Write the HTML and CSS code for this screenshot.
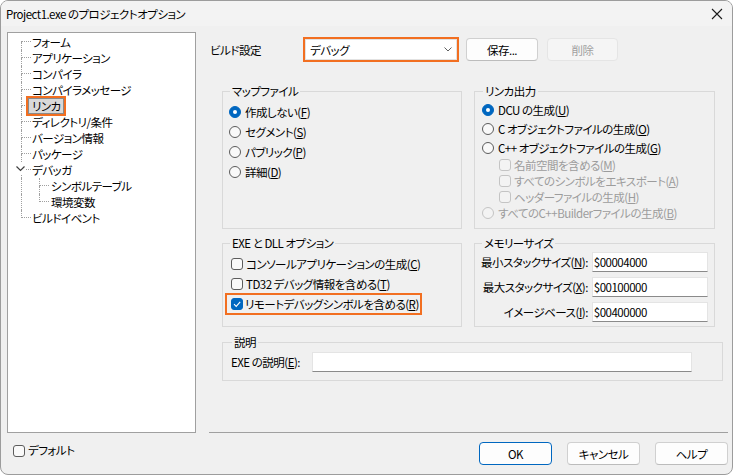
FILE: index.html
```html
<!DOCTYPE html>
<html lang="ja">
<head>
  <meta charset="UTF-8" />
  <title>Project1.exe のプロジェクトオプション</title>
  <link rel="stylesheet" href="styles.css">
</head>
<body>
  <div class="window">
    <div class="titlebar">
      <span class="title">Project1.exe のプロジェクトオプション</span>
      <svg class="close" width="12" height="12" viewBox="0 0 12 12"><path d="M1 1L11 11M11 1L1 11" stroke="#1b1b1b" stroke-width="1.1" fill="none"/></svg>
    </div>

    <div class="client">
      <!-- 左: ツリー -->
      <div class="side">
        <div class="tree">
          <div class="node first"><span class="conn"></span><span class="label">フォーム</span></div>
          <div class="node"><span class="conn"></span><span class="label">アプリケーション</span></div>
          <div class="node"><span class="conn"></span><span class="label">コンパイラ</span></div>
          <div class="node"><span class="conn"></span><span class="label">コンパイラメッセージ</span></div>
          <div class="node"><span class="conn"></span><span class="label sel">リンカ</span></div>
          <div class="node"><span class="conn"></span><span class="label">ディレクトリ/条件</span></div>
          <div class="node"><span class="conn"></span><span class="label">バージョン情報</span></div>
          <div class="node"><span class="conn"></span><span class="label">パッケージ</span></div>
          <div class="node">
            <svg class="toggle" width="15" height="16" viewBox="0 0 15 16">
              <polyline points="0.5,4.5 4.5,8.5 8.5,4.5" fill="none" stroke="#404040" stroke-width="1.2"/>
              <line x1="10" y1="7.5" x2="15" y2="7.5" stroke="#a0a0a0" stroke-dasharray="1 1"/>
              <line x1="5.5" y1="13" x2="5.5" y2="16" stroke="#a0a0a0" stroke-dasharray="1 1"/>
            </svg>
            <span class="label">デバッガ</span>
          </div>
          <div class="node child"><span class="pipe"></span><span class="conn"></span><span class="label">シンボルテーブル</span></div>
          <div class="node child last"><span class="pipe"></span><span class="conn"></span><span class="label">環境変数</span></div>
          <div class="node last"><span class="conn"></span><span class="label">ビルドイベント</span></div>
        </div>
        <label class="default-row"><span class="box"></span><span>デフォルト</span></label>
      </div>

      <!-- 右: 設定 -->
      <div class="main">
        <div class="build-row">
          <span class="build-label">ビルド設定</span>
          <div class="combo">
            <span>デバッグ</span>
            <svg width="8" height="5" viewBox="0 0 8 5"><polyline points="0.5,0.5 4,4 7.5,0.5" fill="none" stroke="#606060" stroke-width="1"/></svg>
          </div>
          <button class="btn save">保存...</button>
          <button class="btn del" disabled>削除</button>
        </div>

        <div class="groups">
          <fieldset class="grp map">
            <legend>マップファイル</legend>
            <label class="opt"><span class="radio on"></span><span>作成しない(<u>F</u>)</span></label>
            <label class="opt"><span class="radio"></span><span>セグメント(<u>S</u>)</span></label>
            <label class="opt"><span class="radio"></span><span>パブリック(<u>P</u>)</span></label>
            <label class="opt"><span class="radio"></span><span>詳細(<u>D</u>)</span></label>
          </fieldset>

          <fieldset class="grp out">
            <legend>リンカ出力</legend>
            <label class="opt"><span class="radio on"></span><span>DCU の生成(<u>U</u>)</span></label>
            <label class="opt"><span class="radio"></span><span>C オブジェクトファイルの生成(<u>O</u>)</span></label>
            <label class="opt"><span class="radio"></span><span>C++ オブジェクトファイルの生成(<u>G</u>)</span></label>
            <label class="opt sub off"><span class="box"></span><span>名前空間を含める(<u>M</u>)</span></label>
            <label class="opt sub off"><span class="box"></span><span>すべてのシンボルをエキスポート(<u>A</u>)</span></label>
            <label class="opt sub off"><span class="box"></span><span>ヘッダーファイルの生成(<u>H</u>)</span></label>
            <label class="opt tail off"><span class="radio"></span><span>すべてのC++Builderファイルの生成(<u>B</u>)</span></label>
          </fieldset>

          <fieldset class="grp exe">
            <legend>EXE と DLL オプション</legend>
            <label class="opt"><span class="box"></span><span>コンソールアプリケーションの生成(<u>C</u>)</span></label>
            <label class="opt"><span class="box"></span><span>TD32 デバッグ情報を含める(<u>T</u>)</span></label>
            <div class="opt">
              <label class="mark"><span class="box on"><svg width="10" height="10" viewBox="0 0 10 10"><polyline points="2,5.2 4.2,7.4 8.2,2.8" fill="none" stroke="#fff" stroke-width="1.1"/></svg></span><span>リモートデバッグシンボルを含める(<u>R</u>)</span></label>
            </div>
          </fieldset>

          <fieldset class="grp mem">
            <legend>メモリーサイズ</legend>
            <div class="mem-grid">
              <span class="mem-label">最小スタックサイズ(<u>N</u>):</span>
              <span class="field">$00004000</span>
              <span class="mem-label">最大スタックサイズ(<u>X</u>):</span>
              <span class="field">$00100000</span>
              <span class="mem-label">イメージベース(<u>I</u>):</span>
              <span class="field">$00400000</span>
            </div>
          </fieldset>
        </div>

        <fieldset class="grp desc">
          <legend>説明</legend>
          <div class="desc-row">
            <span class="desc-label">EXE の説明(<u>E</u>):</span>
            <span class="field wide"></span>
          </div>
        </fieldset>

        <div class="sep"></div>

        <div class="footer">
          <button class="btn ok">OK</button>
          <button class="btn">キャンセル</button>
          <button class="btn">ヘルプ</button>
        </div>
      </div>
    </div>
  </div>
</body>
</html>
```

FILE: styles.css
```css
* { box-sizing: border-box; }
body {
  margin: 0;
  background: #fff;
  font-family: "Noto Sans CJK JP", sans-serif;
  font-size: 11.5px;
  letter-spacing: -0.5px;
  color: #000;
  font-feature-settings: "palt";
}
button { font: inherit; color: inherit; letter-spacing: inherit; }
u { text-underline-offset: 1px; }

.window {
  width: 733px;
  height: 475px;
  border: 1px solid #9c9c9c;
  border-radius: 8px;
  overflow: hidden;
  background: #f0f0f0;
}
.titlebar {
  height: 25px;
  display: flex;
  align-items: center;
  padding-left: 5px;
  background: #f3f3f3;
  line-height: 16px;
}
.titlebar .close {
  margin-left: auto;
  margin-right: 9px;
}

.client {
  display: flex;
  padding: 6px 4px 0 6px;
  height: 448px;
}

/* tree */
.side { width: 189px; }
.tree {
  height: 401px;
  background: #fff;
  border: 1px solid #a0a0a0;
  padding-top: 1px;
}
.node {
  display: flex;
  align-items: center;
  height: 16px;
  padding-left: 13px;
}
.conn {
  width: 10px;
  height: 16px;
  display: grid;
  grid-template-rows: 8px 8px;
}
.conn::before {
  content: "";
  border-left: 1px dotted #a0a0a0;
  border-bottom: 1px dotted #a0a0a0;
}
.conn::after {
  content: "";
  border-left: 1px dotted #a0a0a0;
}
.node.first .conn::before { border-left: none; }
.node.last .conn::after { border-left: none; }
.pipe {
  width: 18px;
  height: 16px;
  border-left: 1px dotted #a0a0a0;
}
.toggle { margin-left: -5px; }
.label {
  margin-left: 1px;
  line-height: 16px;
  white-space: nowrap;
}
.child .label { margin-left: 2px; }
.label.sel {
  margin-left: -3px;
  padding: 0 2px 0 3px;
  line-height: 14px;
  background: #d9d9d9;
  border: 1px solid #8a8a8a;
  box-shadow: 0 0 0 2px #f26f21;
}
.default-row {
  display: flex;
  align-items: center;
  gap: 3px;
  height: 13px;
  margin: 11px 0 0 6px;
  line-height: 13px;
}

/* checkboxes and radios */
.box, .radio {
  flex: none;
  width: 12px;
  height: 12px;
  border: 1px solid #5c5c5c;
  background: #f9f9f9;
  display: inline-flex;
  align-items: center;
  justify-content: center;
}
.box { border-radius: 3px; }
.radio { border-radius: 50%; }
.radio.on {
  background: #0067c0;
  border-color: #0067c0;
}
.radio.on::after {
  content: "";
  width: 4px;
  height: 4px;
  border-radius: 50%;
  background: #fff;
}
.box.on {
  background: #0067c0;
  border-color: #0067c0;
}
.off { color: #9c9c9c; }
.off .box, .off .radio {
  border-color: #c4c4c4;
  background: #f3f3f3;
}

/* top row */
.main {
  width: 519px;
  margin-left: 13px;
}
.build-row {
  display: flex;
  align-items: center;
  height: 25px;
  margin-top: 5px;
}
.build-label {
  width: 94px;
  padding-left: 1px;
}
.combo {
  width: 156px;
  height: 25px;
  border: 2px solid #f26f21;
  background: #fff;
  box-shadow: inset 0 0 0 1px #e2e2e2;
  display: flex;
  align-items: center;
  padding: 0 5px;
  line-height: 16px;
}
.combo svg { margin-left: auto; }
.btn {
  height: 23px;
  width: 73px;
  background: #fdfdfd;
  border: 1px solid #d0d0d0;
  border-bottom-color: #bcbcbc;
  border-radius: 4px;
  padding: 0;
  line-height: 16px;
}
.btn.save { width: 72px; margin-left: 7px; }
.btn.del {
  width: 71px;
  margin-left: 9px;
  background: #f5f5f5;
  border-color: #e5e5e5;
  color: #a0a0a0;
}
.btn.ok { border-color: #0067c0; }

/* group boxes */
.groups {
  display: grid;
  grid-template-columns: 240px 241px;
  grid-template-rows: 146px 92px;
  column-gap: 12px;
  row-gap: 6px;
  margin: 21px 0 0 13px;
}
.grp {
  margin: 0;
  min-width: 0;
  border: 1px solid #d9d9d9;
  padding: 0 6px;
}
.grp legend {
  padding: 0 2px;
  margin-left: 1px;
  line-height: 16px;
}
.opt {
  display: flex;
  align-items: center;
  gap: 4px;
  height: 20px;
  line-height: 16px;
  white-space: nowrap;
}
.opt .box { margin-right: -1px; }
.map { padding-top: 3px; }
.out { padding: 1px 7px 0; }
.out .opt { height: 19px; }
.out .opt.sub { height: 16px; padding-left: 17px; }
.out .opt.tail { height: 16px; }
.exe { padding: 3px 8px 0; }
.exe legend { margin-left: -1px; }
.mark {
  display: flex;
  align-items: center;
  gap: 3px;
  height: 18px;
  margin-left: -4px;
  padding: 0 1px 0 4px;
  box-shadow: 0 0 0 2px #f26f21;
}
.mem { padding: 1px 7px 0 6px; }
.mem-grid {
  display: grid;
  grid-template-columns: 1fr 116px;
  grid-auto-rows: 20px;
  column-gap: 4px;
  row-gap: 5px;
  align-items: center;
}
.mem-label {
  justify-self: end;
  white-space: nowrap;
  line-height: 16px;
}
.field {
  height: 20px;
  background: #fff;
  border: 1px solid #e4e4e4;
  border-bottom-color: #8a8a8a;
  padding-left: 1px;
  line-height: 18px;
}
.desc {
  width: 501px;
  height: 47px;
  margin: 7px 0 0 13px;
  padding: 2px 8px 0;
}
.desc-row {
  display: flex;
  align-items: center;
}
.desc-label {
  width: 81px;
  white-space: nowrap;
}
.field.wide { width: 380px; }

/* bottom */
.sep {
  height: 1px;
  background: #a0a0a0;
  margin-top: 51px;
}
.footer {
  display: flex;
  justify-content: flex-end;
  gap: 15px;
  margin-top: 9px;
}
```
